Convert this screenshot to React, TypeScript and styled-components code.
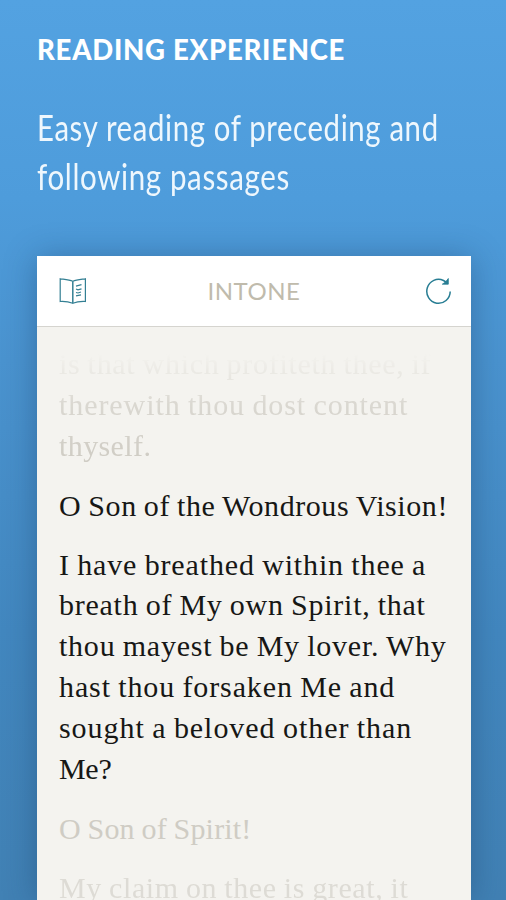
import React from "react";
import styled, { createGlobalStyle } from "styled-components";

const GlobalStyle = createGlobalStyle`
  html, body { margin: 0; padding: 0; }
  body { width: 506px; height: 900px; overflow: hidden; }
`;

const Page = styled.main`
  box-sizing: border-box;
  width: 506px;
  height: 900px;
  padding: 32px 35px 0 37px;
  overflow: hidden;
  display: flex;
  flex-direction: column;
  background: linear-gradient(180deg, #53a2e1 0%, #4e9cdb 22%, #4a93cf 40%, #4287bf 70%, #4181b4 100%);
`;

const Headline = styled.h1`
  margin: 0;
  flex: none;
  height: 36px;
  font: 900 27.5px/36px Lato, sans-serif;
  letter-spacing: 0.75px;
  color: #fff;
  white-space: nowrap;
`;

const Tagline = styled.p`
  margin: 34px 0 0;
  flex: none;
  height: 154px;
  font: 400 37px/49px Lato, sans-serif;
  letter-spacing: 0.8px;
  color: #eef7fd;
`;

const TagLine = styled.span<{ $stretch: number }>`
  display: block;
  width: max-content;
  white-space: nowrap;
  transform: scaleX(${(p) => p.$stretch});
  transform-origin: left;
`;

const Card = styled.section`
  flex: 1;
  min-height: 0;
  display: flex;
  flex-direction: column;
  width: 434px;
  background: #f4f3ef;
  box-shadow: 0 2px 30px rgba(20, 55, 95, 0.38);
`;

const Toolbar = styled.header`
  box-sizing: border-box;
  height: 71px;
  flex: none;
  display: grid;
  grid-template-columns: 28px 1fr 28px;
  align-items: center;
  padding: 0 18px 0 22px;
  background: #fff;
  border-bottom: 1px solid #d5d4cf;
`;

const ToolbarTitle = styled.h2`
  margin: 0;
  padding-right: 4px;
  text-align: center;
  font: 400 24px/30px Lato, sans-serif;
  letter-spacing: 0.5px;
  color: #c0bbac;
`;

const IconButton = styled.button`
  display: flex;
  padding: 0;
  border: 0;
  background: none;
`;

const Reader = styled.article`
  flex: 1;
  min-height: 0;
  padding: 17px 22px 0;
  overflow: hidden;
  font-family: "Liberation Serif", serif;
  font-size: 30px;
  line-height: 40.8px;
  word-spacing: -1px;
`;

const Passage = styled.p<{ $tone: "active" | "above" | "below"; $gap?: number }>`
  margin: ${(p) => p.$gap ?? 0}px 0 0;
  color: ${(p) => (p.$tone === "active" ? "#171715" : "#cfccc4")};
  ${(p) => p.$tone === "above" && "mask-image: linear-gradient(180deg, transparent 10px, rgba(0,0,0,.35) 36px, rgba(0,0,0,.7) 60px, #000 115px);"}
`;

const FadingPassage = styled(Passage)`
  opacity: 0.6;
`;

const Line = styled.span<{ $track: number }>`
  display: block;
  white-space: nowrap;
  letter-spacing: ${(p) => p.$track}px;
`;

const BookIcon = () => (
  <svg width="28" height="28" viewBox="0 0 28 28" fill="none" stroke="#337f93" strokeWidth="1.2">
    <path d="M1.2 1.8C5 2.4 10 2.8 13.8 4.2C17.5 2.8 22.5 2.4 26.4 1.8V24.5C22.5 24.3 17.5 24.8 13.8 26.3C10 24.8 5 24.3 1.2 24.5Z" />
    <path d="M13.8 4.2V26.3" strokeWidth="1.5" />
    <path d="M17 9.2l5.5-1.5M17 12l2 .8 3.5-1M17 15.5l2 .5 3-1M17 18.8l5-1" />
  </svg>
);

const RefreshIcon = () => (
  <svg width="28" height="28" viewBox="0 0 28 28" fill="none" stroke="#277d93" strokeWidth="1.5">
    <path d="M25.2 14.5A11.7 12 0 1 1 18.5 3.5L21 5" />
    <path d="M23.3 1.5V7.2H17.3L20.5 5Z" fill="#277d93" strokeWidth="0.8" />
  </svg>
);

export default function App() {
  return (
    <>
      <GlobalStyle />
      <Page>
        <Headline>READING EXPERIENCE</Headline>
        <Tagline>
          <TagLine $stretch={0.793}>Easy reading of preceding and</TagLine>
          <TagLine $stretch={0.797}>following passages</TagLine>
        </Tagline>
        <Card>
          <Toolbar>
            <IconButton aria-label="Library"><BookIcon /></IconButton>
            <ToolbarTitle>INTONE</ToolbarTitle>
            <IconButton aria-label="Refresh"><RefreshIcon /></IconButton>
          </Toolbar>
          <Reader>
            <Passage $tone="above">
              <Line $track={0.7}>is that which profiteth thee, if</Line>
              <Line $track={0.92}>therewith thou dost content</Line>
              <Line $track={0.4}>thyself.</Line>
            </Passage>
            <Passage $tone="active" $gap={20}>
              <Line $track={0.58}>O Son of the Wondrous Vision!</Line>
            </Passage>
            <Passage $tone="active" $gap={17.5}>
              <Line $track={0.86}>I have breathed within thee a</Line>
              <Line $track={0.75}>breath of My own Spirit, that</Line>
              <Line $track={0.77}>thou mayest be My lover. Why</Line>
              <Line $track={0.88}>hast thou forsaken Me and</Line>
              <Line $track={0.95}>sought a beloved other than</Line>
              <Line $track={-0.3}>Me?</Line>
            </Passage>
            <Passage $tone="below" $gap={20}>
              <Line $track={0.19}>O Son of Spirit!</Line>
            </Passage>
            <FadingPassage $tone="below" $gap={17.5}>
              <Line $track={0.62}>My claim on thee is great, it</Line>
            </FadingPassage>
          </Reader>
        </Card>
      </Page>
    </>
  );
}
